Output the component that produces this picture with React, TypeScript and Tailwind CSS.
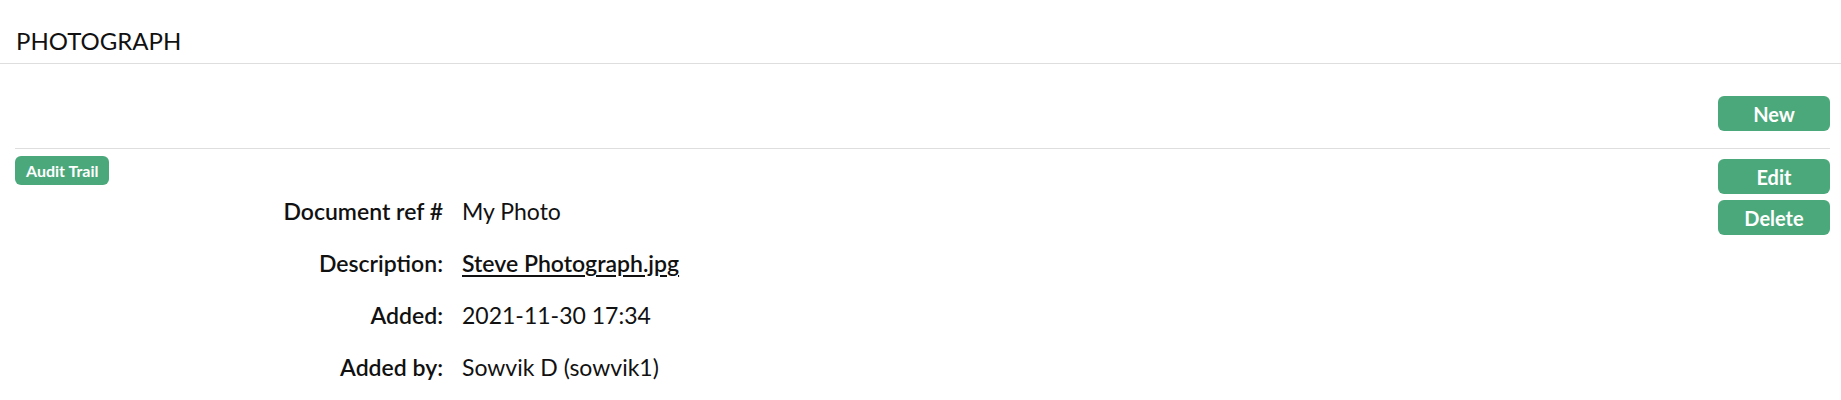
const details = [
  { label: 'Document ref #', value: 'My Photo' },
  { label: 'Description:', value: 'Steve Photograph.jpg', link: true },
  { label: 'Added:', value: '2021-11-30 17:34' },
  { label: 'Added by:', value: 'Sowvik D (sowvik1)' },
]

function GreenButton({ children }: { children: string }) {
  return (
    <button className="flex h-[35px] w-[112px] items-center justify-center rounded-[6px] bg-[#4ba87b] text-[20px] font-bold leading-none text-white">
      {children}
    </button>
  )
}

export default function App() {
  return (
    <div className="min-h-[400px] bg-white font-['Lato',sans-serif] text-[#111]">
      <div className="flex h-[64px] items-end border-b border-[#dedede] px-[16px] pb-[10px]">
        <h2 className="text-[24px] font-normal leading-none">PHOTOGRAPH</h2>
      </div>

      <div className="pl-[15px] pr-[11px]">
        <div className="flex justify-end border-b border-[#dedede] pb-[17px] pt-[32px]">
          <GreenButton>New</GreenButton>
        </div>

        <div className="flex justify-between">
          <div className="flex-1">
            <span className="mt-[7px] inline-flex h-[29px] items-center rounded-[6px] bg-[#4ba87b] px-[11px] text-[16px] font-bold text-white">
              Audit Trail
            </span>
            <div className="grid grid-cols-[428px_1fr] gap-x-[19px]">
              {details.map((row) => (
                <div key={row.label} className="contents">
                  <div className="h-[52px] text-right text-[23px] font-semibold leading-[52px]">
                    {row.label}
                  </div>
                  <div className="h-[52px] text-[23px] leading-[52px]">
                    {row.link ? (
                      <a href="#" className="font-semibold underline underline-offset-[3px]">
                        {row.value}
                      </a>
                    ) : (
                      row.value
                    )}
                  </div>
                </div>
              ))}
            </div>
          </div>

          <div className="mt-[10px] flex flex-col gap-[6px]">
            <GreenButton>Edit</GreenButton>
            <GreenButton>Delete</GreenButton>
          </div>
        </div>
      </div>
    </div>
  )
}
